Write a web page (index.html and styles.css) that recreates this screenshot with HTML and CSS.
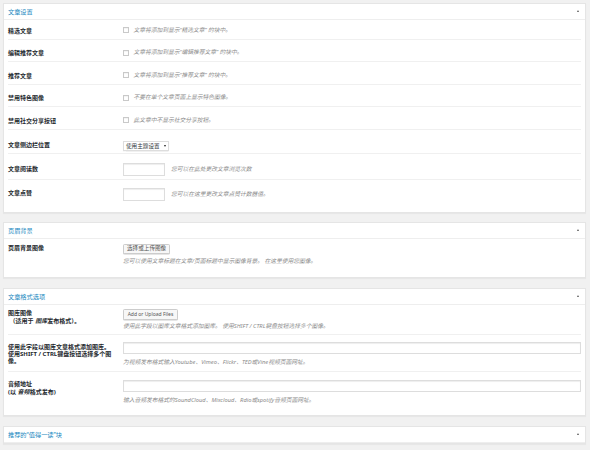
FILE: index.html
```html
<!DOCTYPE html>
<html lang="zh-CN">
<head>
<meta charset="utf-8">
<title>文章设置</title>
<link rel="stylesheet" href="styles.css">
</head>
<body>
<section class="panel panel-first">
  <header class="panel-head">
    <h2 class="panel-title">文章设置</h2>
    <span class="toggle"></span>
  </header>
  <div class="panel-body">
    <div class="row row-check row-first">
      <div class="label">精选文章</div>
      <div class="field inline"><span class="checkbox"></span><span class="desc">文章将添加到显示“精选文章” 的块中。</span></div>
    </div>
    <div class="row row-check">
      <div class="label">编辑推荐文章</div>
      <div class="field inline"><span class="checkbox"></span><span class="desc">文章将添加到显示“编辑推荐文章” 的块中。</span></div>
    </div>
    <div class="row row-check">
      <div class="label">推荐文章</div>
      <div class="field inline"><span class="checkbox"></span><span class="desc">文章将添加到显示“推荐文章” 的块中。</span></div>
    </div>
    <div class="row row-check">
      <div class="label">禁用特色图像</div>
      <div class="field inline"><span class="checkbox"></span><span class="desc">不要在单个文章页面上显示特色图像。</span></div>
    </div>
    <div class="row row-check">
      <div class="label">禁用社交分享按钮</div>
      <div class="field inline"><span class="checkbox"></span><span class="desc">此文章中不显示社交分享按钮。</span></div>
    </div>
    <div class="row row-select">
      <div class="label">文章侧边栏位置</div>
      <div class="field"><span class="select">使用主题设置<span class="caret"></span></span></div>
    </div>
    <div class="row row-input">
      <div class="label">文章阅读数</div>
      <div class="field inline"><span class="input small"></span><span class="desc">您可以在此处更改文章浏览次数</span></div>
    </div>
    <div class="row row-input row-last">
      <div class="label">文章点赞</div>
      <div class="field inline"><span class="input small"></span><span class="desc">您可以在这里更改文章点赞计数器值。</span></div>
    </div>
  </div>
</section>

<section class="panel">
  <header class="panel-head">
    <h2 class="panel-title">页眉背景</h2>
    <span class="toggle"></span>
  </header>
  <div class="panel-body">
    <div class="row row-btn row-last">
      <div class="label">页眉背景图像</div>
      <div class="field">
        <span class="button">选择或上传图像</span>
        <p class="desc below">您可以使用文章标题在文章/页面标题中显示图像背景。 在这里使用您图像。</p>
      </div>
    </div>
  </div>
</section>

<section class="panel">
  <header class="panel-head">
    <h2 class="panel-title">文章格式选项</h2>
    <span class="toggle"></span>
  </header>
  <div class="panel-body">
    <div class="row row-gallery">
      <div class="label">图库图像<br>&nbsp;（适用于 <em>图库</em>发布格式）。</div>
      <div class="field">
        <span class="button latin">Add or Upload Files</span>
        <p class="desc below">使用此字段以图库文章格式添加图库。 使用SHIFT / CTRL键盘按钮选择多个图像。</p>
      </div>
    </div>
    <div class="row row-video">
      <div class="label">使用此字段以图库文章格式添加图库。<br>使用SHIFT / CTRL键盘按钮选择多个图<br>像。</div>
      <div class="field">
        <span class="input wide"></span>
        <p class="desc below">为视频发布格式输入Youtube、Vimeo、Flickr、TED或Vine视频页面网址。</p>
      </div>
    </div>
    <div class="row row-audio row-last">
      <div class="label">音频地址<br>(以 <em>音频</em>格式发布)</div>
      <div class="field">
        <span class="input wide"></span>
        <p class="desc below">输入音频发布格式的SoundCloud、Mixcloud、Rdio或spotify音频页面网址。</p>
      </div>
    </div>
  </div>
</section>

<section class="panel">
  <header class="panel-head">
    <h2 class="panel-title">推荐的“值得一读”块</h2>
    <span class="toggle"></span>
  </header>
  <div class="panel-body">
    <div class="row row-last">
      <div class="label"></div>
      <div class="field"></div>
    </div>
  </div>
</section>
</body>
</html>
```
FILE: styles.css
```css
* { box-sizing: border-box; }

html, body {
  margin: 0;
  background: #f1f1f1;
}

body {
  padding: 3px 4px 0 3px;
  font-family: "Noto Sans", "Noto Sans CJK SC", sans-serif;
  font-size: 6px;
  line-height: 7px;
  color: #23282d;
  overflow: hidden;
}

.panel {
  background: #fff;
  border: 1px solid #e5e5e5;
  box-shadow: 0 1px 1px rgba(0, 0, 0, 0.04);
  margin-bottom: 10px;
}

.panel-first { margin-bottom: 9px; }

.panel-head {
  height: 16px;
  border-bottom: 1px solid #eeeeee;
  display: flex;
  align-items: center;
  justify-content: space-between;
  padding: 0 6px 0 4px;
}

.panel-title {
  margin: 0;
  font-size: 6.2px;
  font-weight: normal;
  color: #1a88c0;
  line-height: 7px;
}

.toggle {
  width: 0;
  height: 0;
  border-left: 1.5px solid transparent;
  border-right: 1.5px solid transparent;
  border-bottom: 2.5px solid #555;
  margin-top: -1px;
}

.panel-body {
  padding: 0 4px;
}

.row {
  display: grid;
  grid-template-columns: 104px 1fr;
  column-gap: 11px;
  align-items: start;
  border-bottom: 1px solid #f0f0f0;
}

.row-last { border-bottom: 0; }

.label {
  font-weight: bold;
  line-height: 7px;
  color: #23282d;
}

.label em { font-style: italic; }

.field.inline {
  display: flex;
  align-items: center;
  gap: 4.5px;
}

/* checkbox rows */
.row-check { padding: 9.2px 0 4.3px; }
.row-check.row-first { padding-top: 6.7px; }
.row-check .label { padding-top: 1px; }
.row-check .field { height: 7px; }

.checkbox {
  display: block;
  width: 6px;
  height: 6px;
  border: 1px solid #c9c9c9;
  box-shadow: inset 0 0.5px 1px rgba(0, 0, 0, 0.08);
  background: #fff;
  flex: none;
}

.desc {
  font-style: italic;
  font-size: 5.75px;
  line-height: 7px;
  color: #8a8a8a;
  margin: 0;
  white-space: nowrap;
}

/* select row */
.row-select { padding: 11.4px 0 1.8px; }
.row-select .label { padding-top: 0.5px; }

.select {
  display: flex;
  align-items: center;
  justify-content: space-between;
  width: 46px;
  height: 10px;
  padding: 0 2px;
  border: 1px solid #dddddd;
  box-shadow: 0 0.5px 1px rgba(0, 0, 0, 0.06);
  font-size: 5.6px;
  line-height: 7px;
  color: #32373c;
}

.caret {
  width: 0;
  height: 0;
  border-left: 1.2px solid transparent;
  border-right: 1.2px solid transparent;
  border-top: 2px solid #222;
}

/* text input rows */
.row-input { padding: 8.8px 0 2.7px; }
.row-input .label { padding-top: 3.2px; }
.row-input.row-last { padding: 8px 0 11px; }
.row-input.row-last .label { padding-top: 2.2px; }

.input {
  display: block;
  height: 13px;
  border: 1px solid #dddddd;
  box-shadow: inset 0 1px 1px rgba(0, 0, 0, 0.07);
  background: #fff;
  flex: none;
}

.input.small { width: 42px; }
.inline .input.small + .desc { margin-left: 1.5px; }

.input.wide {
  width: 458px;
  height: 12.3px;
}

.button {
  display: flex;
  align-items: center;
  justify-content: center;
  width: max-content;
  height: 10px;
  padding: 0 3px;
  border: 1px solid #cccccc;
  border-radius: 1.5px;
  background: #f7f7f7;
  box-shadow: 0 0.5px 0 #cccccc;
  font-size: 5.6px;
  line-height: 7px;
  color: #555555;
  white-space: nowrap;
}

.button.latin {
  height: 11px;
  width: 55px;
  font-size: 5px;
  padding: 0;
}

.desc.below { margin-top: 4px; }

/* header background panel */
.row-btn { padding: 5.3px 0 11.7px; }
.row-btn .label { padding-top: 1.5px; }

/* post format panel */
.row-gallery { padding: 4.3px 0 3.2px; }
.row-gallery .label { padding-top: 1.25px; line-height: 7.8px; }
.row-gallery .desc.below { margin-top: 3.5px; }

.row-video { padding: 7.3px 0 4.7px; }
.row-video .label { padding-top: 2px; line-height: 7.3px; }
.row-video .desc.below { margin-top: 5px; }

.row-audio { padding: 8px 0 11.2px; }
.row-audio .label { padding-top: 0.3px; line-height: 8px; }
.row-audio .desc.below { margin-top: 4.5px; }
```
